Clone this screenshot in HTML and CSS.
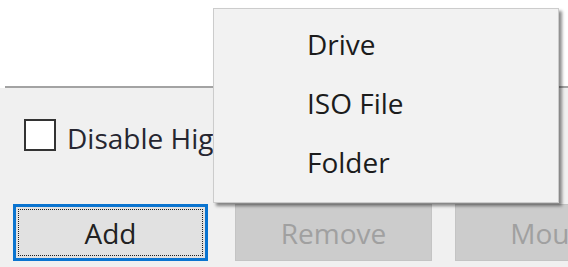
FILE: index.html
```html
<!DOCTYPE html>
<html>
<head>
<meta charset="utf-8">
<link rel="stylesheet" href="styles.css">
</head>
<body>
<div class="dialog">
  <div class="top">
    <div class="rule-space"></div>
    <div class="rule"></div>
  </div>
  <div class="opts">
    <label class="check-row">
      <span class="checkbox"></span>
      <span class="check-label">Disable High DPI scaling</span>
    </label>
  </div>
  <div class="buttons">
    <button class="btn btn-add">Add</button>
    <button class="btn btn-disabled btn-remove" disabled>Remove</button>
    <button class="btn btn-disabled btn-mount" disabled>Mount</button>
  </div>
  <div class="menu">
    <div class="menu-item">Drive</div>
    <div class="menu-item">ISO File</div>
    <div class="menu-item">Folder</div>
  </div>
</div>
</body>
</html>
```
FILE: styles.css
```css
html, body {
  margin: 0;
  padding: 0;
}
body {
  width: 568px;
  height: 267px;
  overflow: hidden;
  background: #f0f0f0;
  font-family: "Open Sans", "Noto Sans", sans-serif;
  font-size: 28px;
  color: #1e1e1e;
}
.dialog {
  position: relative;
  width: 568px;
  height: 267px;
  overflow: hidden;
}
.top {
  background: #ffffff;
  display: flex;
  flex-direction: column;
}
.rule-space {
  height: 86px;
}
.rule {
  height: 2px;
  margin-left: 5px;
  background: #a3a3a3;
}
.opts {
  height: 116px;
  box-sizing: border-box;
  padding: 30px 0 0 24px;
}
.check-row {
  display: flex;
  align-items: center;
  gap: 11px;
  white-space: nowrap;
}
.checkbox {
  width: 28px;
  height: 28px;
  border: 2px solid #333333;
  background: #ffffff;
  flex: none;
}
.check-label {
  line-height: 34px;
  position: relative;
  top: 3px;
  color: #262630;
}
.buttons {
  display: flex;
  padding-left: 13px;
  white-space: nowrap;
}
.btn {
  font-family: inherit;
  font-size: 28px;
  height: 57px;
  box-sizing: border-box;
  padding: 0;
  margin: 0;
  flex: none;
}
.btn-add {
  width: 195px;
  background: #e1e1e1;
  border: 3px solid #0a74d0;
  color: #222222;
  outline: 1px dotted #222222;
  outline-offset: -6px;
}
.btn-disabled {
  background: #cccccc;
  border: 1px solid #c4c4c4;
  color: #a0a0a0;
}
.btn-remove {
  width: 197px;
  margin-left: 27px;
}
.btn-mount {
  width: 197px;
  margin-left: 23px;
}
.menu {
  position: absolute;
  left: 213px;
  top: 8px;
  width: 346px;
  height: 195px;
  box-sizing: border-box;
  background: #f2f2f2;
  border: 1px solid #cccccc;
  box-shadow: 3px 3px 3px rgba(0, 0, 0, 0.45);
  padding-top: 6px;
}
.menu-item {
  line-height: 59px;
  padding-left: 93px;
  color: #1c1c1c;
}
```
